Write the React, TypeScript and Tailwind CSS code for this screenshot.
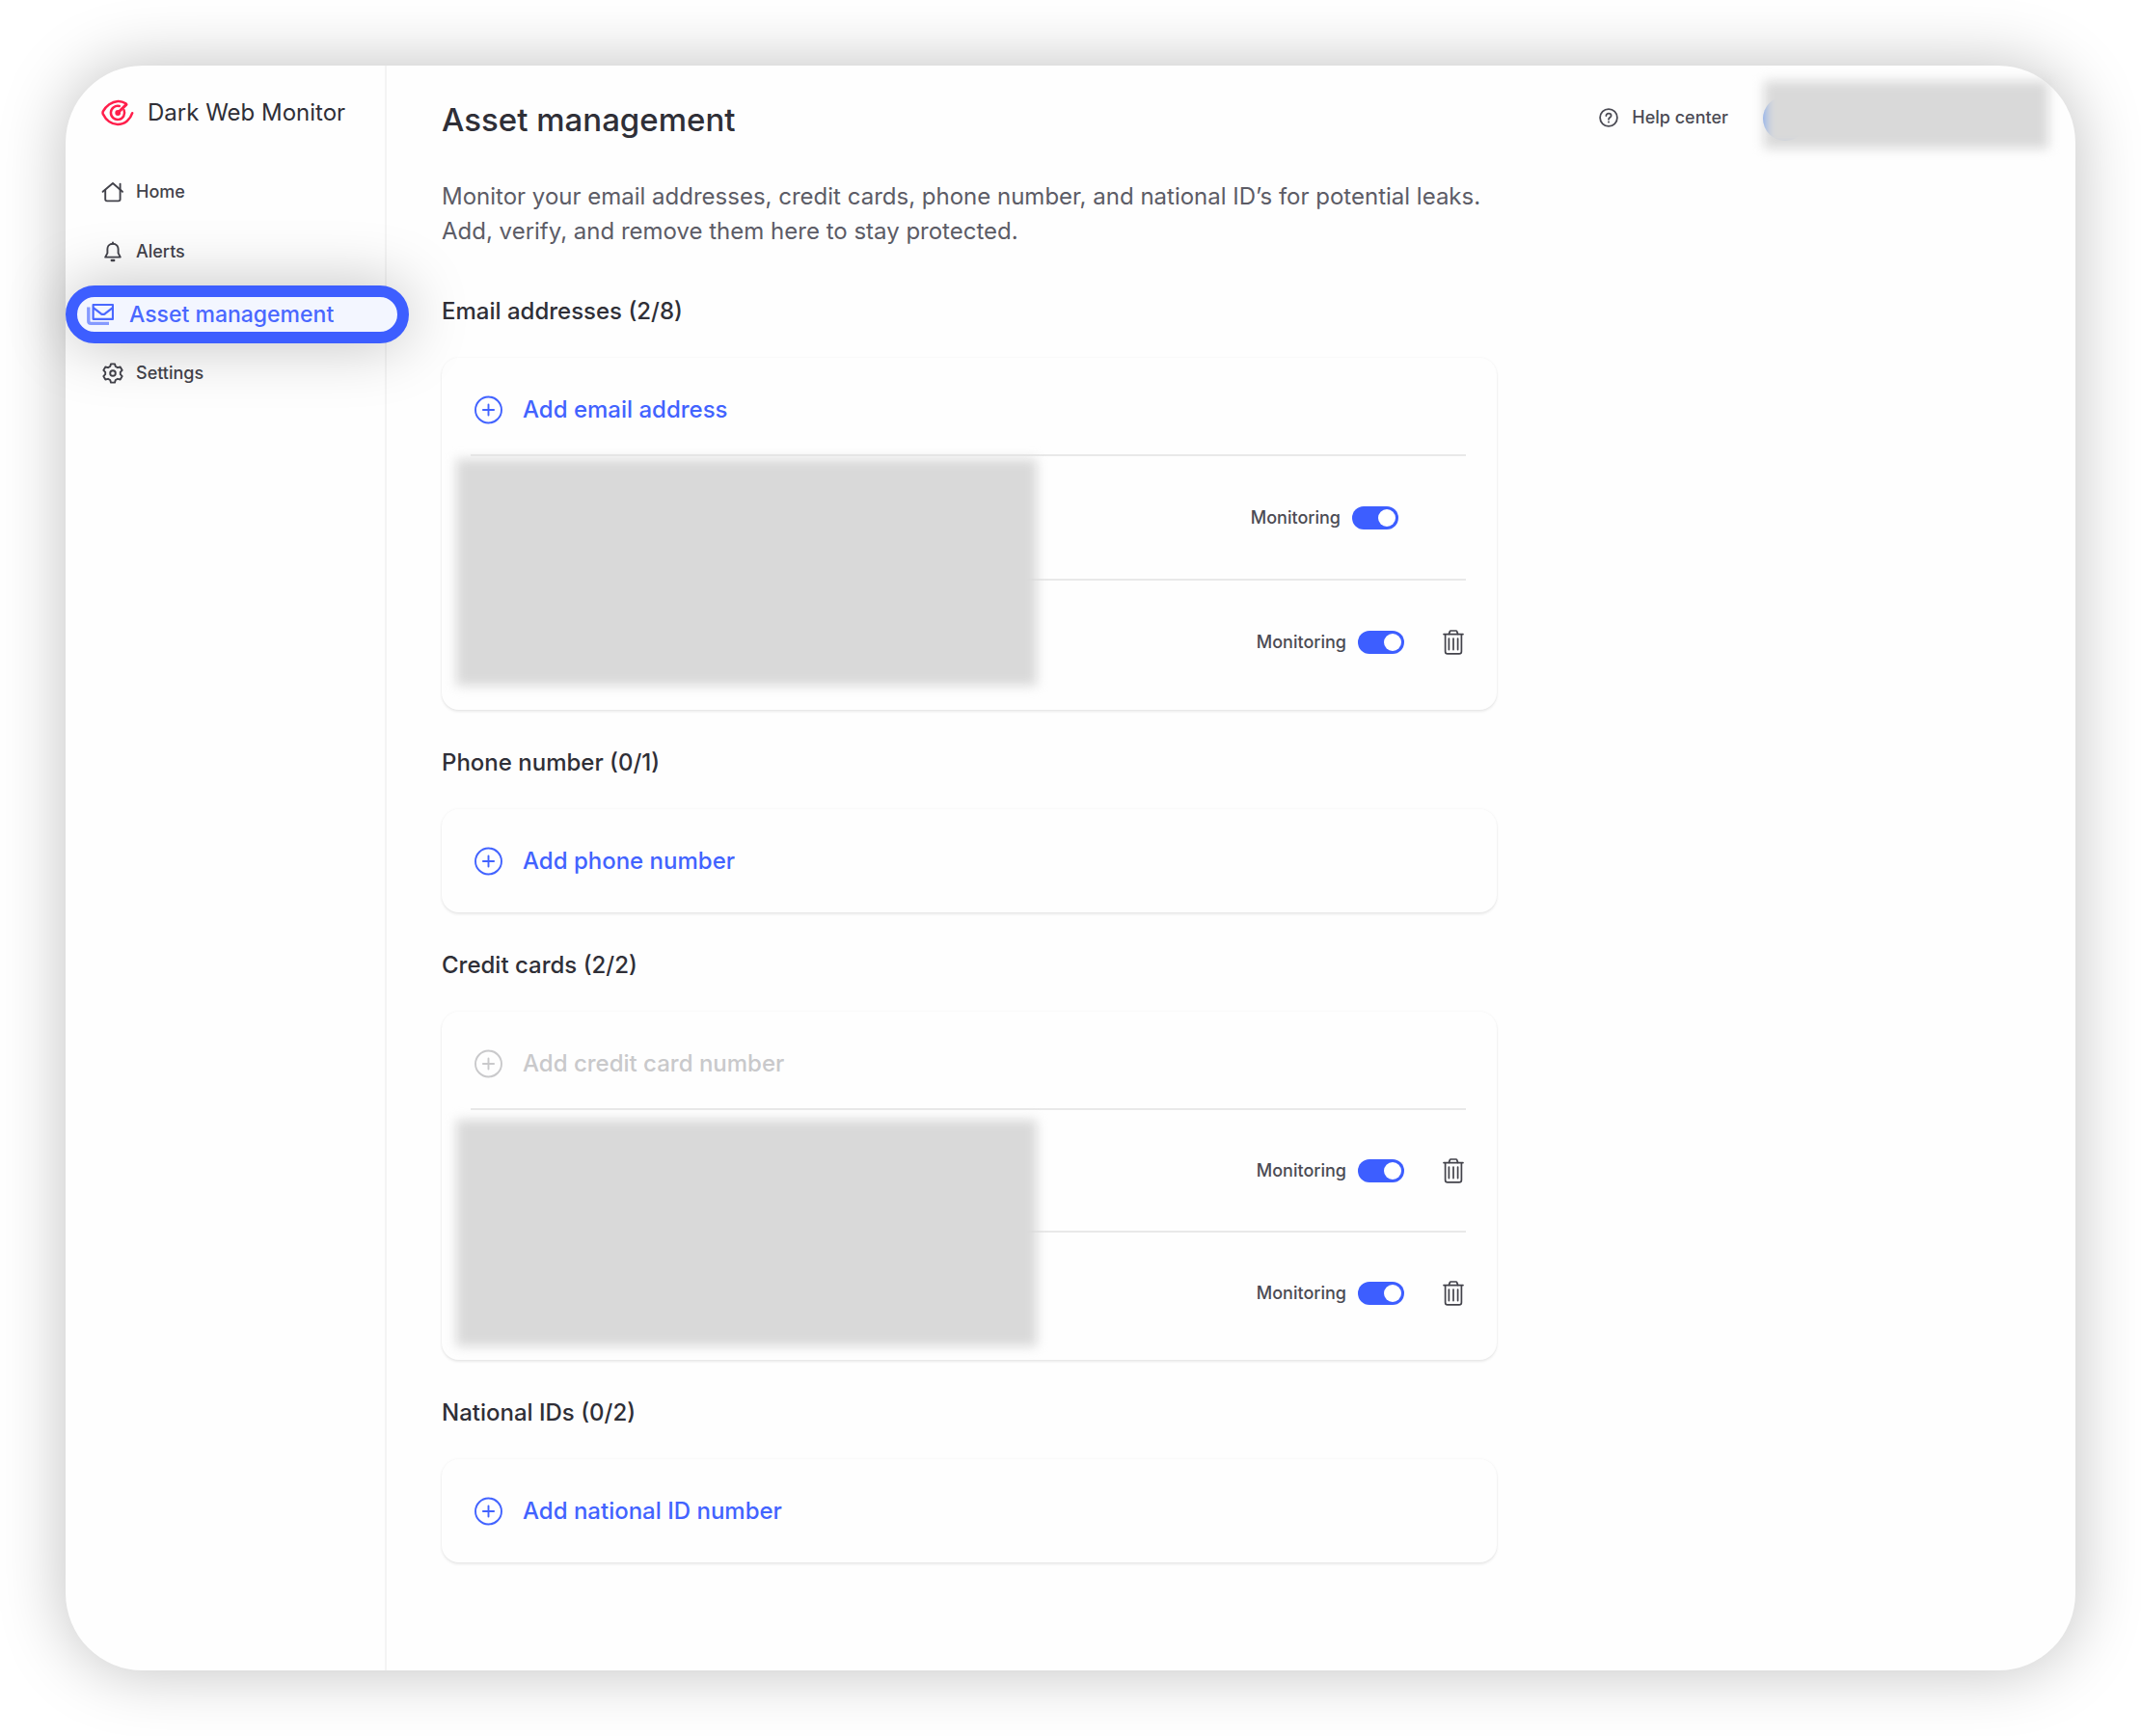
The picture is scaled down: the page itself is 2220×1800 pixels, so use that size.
import type { ReactNode } from "react";

function LogoIcon() {
  return (
    <svg viewBox="0 0 34 28" className="h-7 w-[34px] shrink-0" fill="none" stroke="#ff1f4b" strokeWidth="2.5" strokeLinecap="round" aria-hidden="true">
      <path d="M25.4 4.2C22.9 2.6 20.2 1.8 17.3 1.9C10.8 2.2 4.8 7 1.9 12.4C1.4 13.4 1.4 14.4 1.9 15.4C4.9 21.6 10.6 26 17 26C24.6 26 30.3 20.6 32.2 14.2" />
      <path d="M23.6 11.2A7.1 7.1 0 1 1 18.8 7" />
      <path d="M17.4 13.8L26 5.4" strokeWidth="3" />
      <circle cx="17.2" cy="14" r="2.9" fill="#ff1f4b" stroke="none" />
    </svg>
  );
}

function HomeIcon() {
  return (
    <svg viewBox="0 0 24 22" className="h-[22px] w-6 shrink-0" fill="none" stroke="currentColor" strokeWidth="1.9" strokeLinecap="round" strokeLinejoin="round" aria-hidden="true">
      <path d="M1.6 10.8L12 2L22 10.8" />
      <path d="M4.2 9V18.6Q4.2 20.4 6 20.4H17.8Q19.6 20.4 19.6 18.6V9" />
      <path d="M19.6 8.4V2.8" />
    </svg>
  );
}

function BellIcon() {
  return (
    <svg viewBox="0 0 24 22" className="h-[22px] w-6 shrink-0" fill="none" stroke="currentColor" strokeWidth="1.9" strokeLinecap="round" strokeLinejoin="round" aria-hidden="true">
      <path d="M12 1.4V2.8" />
      <path d="M12 2.8C8.6 2.8 6.4 5.2 6.4 8.3V12.4L4.2 16.6H19.8L17.6 12.4V8.3C17.6 5.2 15.4 2.8 12 2.8Z" />
      <path d="M10.8 20H13.2" strokeWidth="2.4" />
    </svg>
  );
}

function GearIcon() {
  return (
    <svg viewBox="0 0 24 24" className="size-6 shrink-0" fill="none" stroke="currentColor" strokeWidth="1.9" strokeLinejoin="round" aria-hidden="true">
      <path d="M10 2.4H14L14.8 5L17 6.2L19.7 5.5L21.7 8.9L19.8 10.8V13.2L21.7 15.1L19.7 18.5L17 17.8L14.8 19L14 21.6H10L9.2 19L7 17.8L4.3 18.5L2.3 15.1L4.2 13.2V10.8L2.3 8.9L4.3 5.5L7 6.2L9.2 5Z" />
      <circle cx="12" cy="12" r="2.8" />
    </svg>
  );
}

function AssetsIcon() {
  return (
    <svg viewBox="0 0 28 24" className="h-6 w-7 shrink-0" fill="none" stroke="currentColor" strokeLinejoin="round" aria-hidden="true">
      <rect x="6.6" y="2" width="20.4" height="14.8" strokeWidth="2.2" />
      <path d="M6.8 5.2L14.6 11.2Q16.8 12.6 19 11.2L26.8 5.2" strokeWidth="2.2" />
      <path d="M1.8 4.4V19Q1.8 21.4 4.2 21.4H23" strokeWidth="3.4" strokeOpacity="0.65" />
    </svg>
  );
}

function HelpIcon() {
  return (
    <svg viewBox="0 0 20 20" className="size-5 shrink-0" fill="none" stroke="currentColor" strokeWidth="1.8" strokeLinecap="round" aria-hidden="true">
      <circle cx="10" cy="10" r="8.9" />
      <path d="M7.4 8.1C7.4 6.6 8.5 5.6 10 5.6C11.5 5.6 12.6 6.5 12.6 7.9C12.6 9.7 10 9.8 10 11.8" />
      <path d="M10 14.4V14.5" strokeWidth="2" />
    </svg>
  );
}

function PlusCircleIcon() {
  return (
    <svg viewBox="0 0 30 30" className="size-[30px] shrink-0" fill="none" stroke="currentColor" strokeWidth="1.9" strokeLinecap="round" aria-hidden="true">
      <circle cx="14.5" cy="15" r="13.5" />
      <path d="M14.5 9.4V20.6M8.9 15H20.1" />
    </svg>
  );
}

function TrashIcon() {
  return (
    <svg viewBox="0 0 22 26" className="h-[26px] w-[22px]" fill="none" stroke="currentColor" strokeWidth="1.7" strokeLinecap="round" strokeLinejoin="round" aria-hidden="true">
      <path d="M1 4.6H21" />
      <path d="M6.4 4.4L7.4 1.6Q7.6 1 8.4 1H13.6Q14.4 1 14.6 1.6L15.6 4.4" />
      <path d="M2.6 4.8V22.4Q2.6 24.8 5 24.8H17Q19.4 24.8 19.4 22.4V4.8" />
      <path d="M6.4 9V20.6M11 9V20.6M15.6 9V20.6" />
    </svg>
  );
}

function NavItem({ icon, label }: { icon: ReactNode; label: string }) {
  return (
    <a href="#" className="flex h-[62px] items-center gap-3 pl-[37px] text-lg font-medium text-[#43434b]">
      {icon}
      {label}
    </a>
  );
}

function Redaction({ className = "" }: { className?: string }) {
  return <div className={"pointer-events-none absolute bg-[#d9d9d9] blur-[6px] " + className} aria-hidden="true" />;
}

type Asset = { id: string; removable: boolean };

function AssetRow({ id, removable, rowHeight }: Asset & { rowHeight: string }) {
  return (
    <li className={"flex items-center justify-end border-t-2 border-[#e9e9e9] " + rowHeight}>
      <label htmlFor={id} className="pr-3 text-lg font-medium text-[#4b4b54]">
        Monitoring
      </label>
      <input
        id={id}
        type="checkbox"
        role="switch"
        defaultChecked
        className={
          "h-6 w-12 appearance-none rounded-full bg-gray-300 p-[3px] before:block before:size-[18px] before:rounded-full before:bg-white checked:bg-[#3d5eff] checked:before:ml-auto " +
          (removable ? "mr-10" : "mr-[70px]")
        }
      />
      {removable && (
        <button type="button" aria-label="Remove" className="mr-0.5 text-[#43434b]">
          <TrashIcon />
        </button>
      )}
    </li>
  );
}

type SectionProps = {
  title: string;
  action: string;
  disabled?: boolean;
  assets?: Asset[];
  rowHeight?: string;
  redactionTop?: string;
};

function AssetSection({ title, action, disabled = false, assets = [], rowHeight = "", redactionTop = "" }: SectionProps) {
  return (
    <section className="mb-[37px]">
      <h2 className="mb-[30px] text-2xl leading-9 font-medium text-[#2f2f37]">{title}</h2>
      <div className="relative rounded-[18px] pr-8 pb-[7px] pl-[30px] shadow-[0_2px_3px_rgba(0,0,0,0.08),0_0_3px_rgba(0,0,0,0.05)]">
        <button
          type="button"
          disabled={disabled}
          className="flex h-[100px] w-full items-center gap-5 pt-2 pl-1 text-2xl font-medium text-[#4263ff] disabled:text-[#c9c9cb]"
        >
          <PlusCircleIcon />
          {action}
        </button>
        {assets.length > 0 && (
          <>
            <ul>
              {assets.map((asset) => (
                <AssetRow key={asset.id} {...asset} rowHeight={rowHeight} />
              ))}
            </ul>
            <Redaction className={"left-[15px] h-[235px] w-[55%] " + redactionTop} />
          </>
        )}
      </div>
    </section>
  );
}

const sections: SectionProps[] = [
  {
    title: "Email addresses (2/8)",
    action: "Add email address",
    rowHeight: "h-[129px]",
    redactionTop: "top-[105px]",
    assets: [
      { id: "email-1", removable: false },
      { id: "email-2", removable: true },
    ],
  },
  { title: "Phone number (0/1)", action: "Add phone number" },
  {
    title: "Credit cards (2/2)",
    action: "Add credit card number",
    disabled: true,
    rowHeight: "h-[127px]",
    redactionTop: "top-28",
    assets: [
      { id: "card-1", removable: true },
      { id: "card-2", removable: true },
    ],
  },
  { title: "National IDs (0/2)", action: "Add national ID number" },
];

export default function App() {
  return (
    <div className="flex min-h-screen bg-white p-[68px] font-['Inter',sans-serif]">
      <div className="flex flex-1 rounded-[80px] bg-[#fefefe] shadow-[0_0_68px_rgba(0,0,0,0.25)]">
        <aside className="w-[333px] shrink-0 border-r-2 border-[#f4f4f4]">
          <div className="flex h-[98px] items-center gap-3.5 pl-[37px] text-2xl text-[#2f2f37]">
            <LogoIcon />
            Dark Web Monitor
          </div>
          <nav className="pt-0.5">
            <NavItem icon={<HomeIcon />} label="Home" />
            <NavItem icon={<BellIcon />} label="Alerts" />
            <a
              href="#"
              aria-current="page"
              className="relative z-10 mt-1 flex h-[60px] w-[356px] items-center gap-4 rounded-[30px] border-12 border-[#3d5eff] bg-[#f3f6ff] pl-2.5 text-[23px] font-medium text-[#4a68ff] shadow-[0_0_64px_rgba(0,0,0,0.25)]"
            >
              <AssetsIcon />
              Asset management
            </a>
            <NavItem icon={<GearIcon />} label="Settings" />
          </nav>
        </aside>
        <main className="min-w-0 flex-1 pt-4 pr-7 pl-[57px]">
          <header className="flex items-start justify-between">
            <h1 className="text-[33px] leading-[80px] font-medium text-[#2f2f37]">Asset management</h1>
            <div className="flex">
              <a href="#" className="flex h-[76px] items-center gap-3.5 pr-[37px] text-lg font-medium text-[#4b4b54]">
                <HelpIcon />
                Help center
              </a>
              <button type="button" aria-label="Account" className="relative h-[70px] w-[295px]">
                <span className="absolute top-4 -left-px size-[46px] rounded-full bg-[#6f9ff5]" />
                <Redaction className="inset-0" />
              </button>
            </div>
          </header>
          <div className="w-full max-w-[1094px]">
            <p className="mt-[22px] mb-[47px] text-2xl leading-9 text-[#5c5c66]">
              Monitor your email addresses, credit cards, phone number, and national ID’s for potential leaks. Add, verify,
              and remove them here to stay protected.
            </p>
            {sections.map((section) => (
              <AssetSection key={section.title} {...section} />
            ))}
          </div>
        </main>
      </div>
    </div>
  );
}
